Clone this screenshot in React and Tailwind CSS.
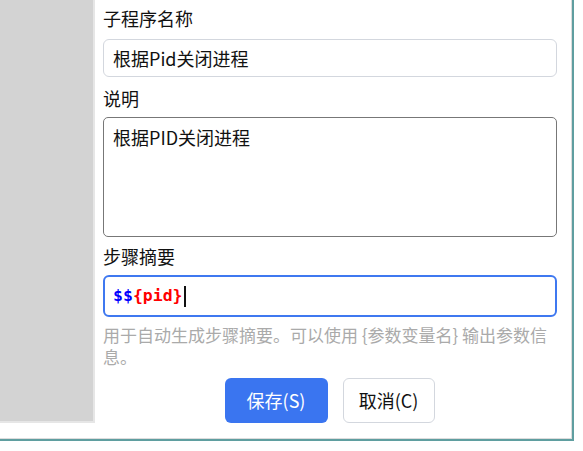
import React from 'react';

const cjk = { fontFamily: '"Noto Sans CJK SC", "Noto Sans", sans-serif' };

export default function App() {
    return (
        <div className="w-[583px] h-[451px] bg-white" style={cjk}>
            <div className="w-[574px] h-[441px] border-r-2 border-b-2 border-[#5f9ea0]">
                <div className="flex h-full w-full border-r border-b border-[#dcdcdc]">
                    {/* left panel */}
                    <div className="w-[95px] h-[423px] shrink-0 bg-[#d3d3d3] border-r-2 border-b-2 border-[#e6e6e6]" />

                    {/* form */}
                    <div className="flex-1 pl-2 pr-[13px] text-[18px] text-[#111]">
                        <div className="mt-[6px] h-6 leading-6">子程序名称</div>
                        <input
                            readOnly
                            value="根据Pid关闭进程"
                            className="mt-[9px] block w-[454px] h-[38px] px-[9px] rounded-md border border-[#d3d7de] bg-white text-[18px] text-[#111] outline-none"
                        />

                        <div className="mt-[9px] h-6 leading-6">说明</div>
                        <div className="mt-[7px] w-[454px] h-[120px] px-[9px] pt-[7px] rounded-[5px] border border-[#777] leading-6">
                            根据PID关闭进程
                        </div>

                        <div className="mt-[7px] h-6 leading-6">步骤摘要</div>
                        <div className="mt-[7px] flex items-center w-[454px] h-[42px] px-[8px] rounded-md border-2 border-[#3f78f0]">
                            <span
                                className="text-[16.5px] font-bold leading-none"
                                style={{ fontFamily: '"DejaVu Sans Mono", "Liberation Mono", monospace' }}
                            >
                                <span className="text-[#0000ff]">$$</span>
                                <span className="text-[#ff0000]">{'{pid}'}</span>
                            </span>
                            <span className="ml-[1px] w-[2px] h-[21px] bg-[#111]" />
                        </div>

                        <p className="mt-[7px] w-[454px] text-[17px] leading-[22px] text-[#aaaaaa]">
                            用于自动生成步骤摘要。可以使用 {'{参数变量名}'} 输出参数信息。
                        </p>

                        <div className="mt-[10px] flex justify-center gap-[15px] pr-[2px]">
                            <button className="w-[103px] h-[45px] rounded-md bg-[#3a75f0] text-white text-[18px]">
                                保存(S)
                            </button>
                            <button className="w-[92px] h-[45px] rounded-md bg-white border border-[#d3d7de] text-[#111] text-[18px]">
                                取消(C)
                            </button>
                        </div>
                    </div>
                </div>
            </div>
        </div>
    );
}
